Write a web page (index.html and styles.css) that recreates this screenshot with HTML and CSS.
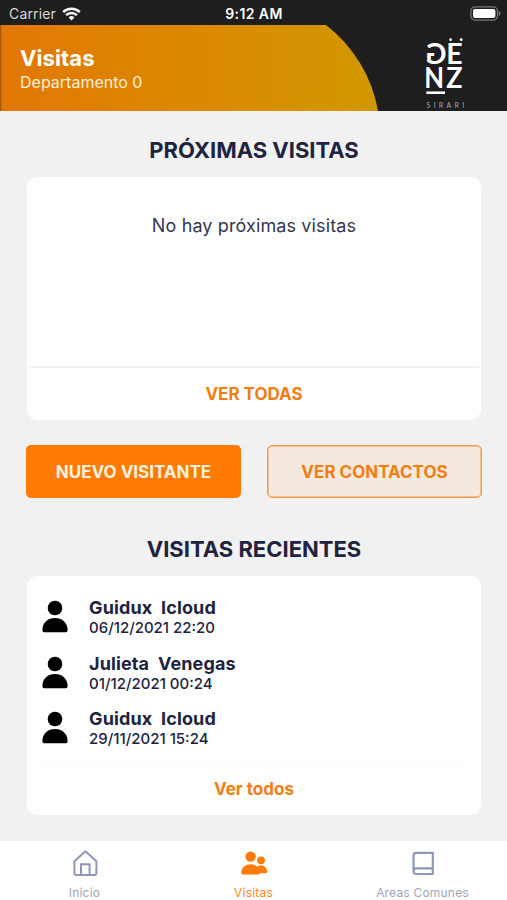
FILE: index.html
```html
<!DOCTYPE html>
<html lang="es">
<head>
<meta charset="utf-8">
<title>Visitas</title>
<link rel="stylesheet" href="styles.css">
</head>
<body>
<div class="status">
  <div class="status-left"><span class="carrier">Carrier</span>
    <svg class="wifi" width="19" height="14" viewBox="0 0 19 14" fill="none" stroke="#fff" stroke-width="2.5"><path d="M1.2 5.1a11.8 11.8 0 0 1 16.6 0M4.1 8.2a7.7 7.7 0 0 1 10.8 0"/><path d="M9.5 13.5L6.6 10.5a4.1 4.1 0 0 1 5.8 0z" fill="#fff" stroke="none"/></svg>
  </div>
  <span class="time">9:12 AM</span>
  <svg class="battery" width="31" height="16" viewBox="0 0 31 16"><rect x=".9" y=".9" width="26.6" height="13.2" rx="4" fill="none" stroke="#777" stroke-width="1.2"/><rect x="3" y="3" width="22.4" height="9" rx="2" fill="#fff"/><path d="M28.8 5v5q1.8-.8 1.8-2.5T28.8 5z" fill="#777"/></svg>
</div>
<header class="header">
  <svg class="swoosh" width="507" height="86" viewBox="0 0 507 86"><defs><linearGradient id="g"><stop offset="0" stop-color="#e27706"/><stop offset=".45" stop-color="#dc8700"/><stop offset="1" stop-color="#d19800"/></linearGradient></defs><path d="M0 0H326A138.7 138.7 0 0 1 378 86H0z" fill="url(#g)"/><path d="M.75 0V86" stroke="#a95b08" stroke-width="1.5"/></svg>
  <div class="heading"><h1>Visitas</h1><p>Departamento 0</p></div>
  <svg class="logo" width="44" height="76" viewBox="0 0 44 76" fill="#fff">
    <g class="logo-letters">
      <text transform="translate(24.6 27.3) scale(-1 1)">G</text>
      <text transform="translate(24.2 27.3) scale(1 1)">E</text>
      <text transform="translate(2.3 51.2) scale(.9 1)">N</text>
      <text transform="translate(24.3 51.2) scale(.94 1)">Z</text>
    </g>
    <circle cx="28.6" cy="2.7" r="1.4"/><circle cx="39.2" cy="2.7" r="1.4"/><path d="M4.3 54.4H23V57H4.3z"/>
    <text class="logo-sub" x="4.6" y="71.4" textLength="37.5">SIRARI</text>
  </svg>
</header>
<main>
  <h2>PRÓXIMAS VISITAS</h2>
  <section class="card upcoming">
    <p class="empty">No hay próximas visitas</p>
    <a class="card-link all">VER TODAS</a>
  </section>
  <div class="actions">
    <button class="primary"><span>NUEVO VISITANTE</span></button>
    <button class="secondary"><span>VER CONTACTOS</span></button>
  </div>
  <h2 class="recent-title">VISITAS RECIENTES</h2>
  <section class="card recent">
    <ul>
      <li><svg class="person" width="26" height="34" viewBox="0 0 26 34"><circle cx="13" cy="8" r="7.3"/><path d="M.4 30.3C.4 22.5 6 18.1 13 18.1s12.6 4.4 12.6 12.2q0 2-1.6 2H2q-1.6 0-1.6-2z"/></svg><div><b>Guidux&nbsp; Icloud</b><time>06/12/2021 22:20</time></div></li>
      <li><svg class="person" width="26" height="34" viewBox="0 0 26 34"><circle cx="13" cy="8" r="7.3"/><path d="M.4 30.3C.4 22.5 6 18.1 13 18.1s12.6 4.4 12.6 12.2q0 2-1.6 2H2q-1.6 0-1.6-2z"/></svg><div><b>Julieta&nbsp; Venegas</b><time>01/12/2021 00:24</time></div></li>
      <li><svg class="person" width="26" height="34" viewBox="0 0 26 34"><circle cx="13" cy="8" r="7.3"/><path d="M.4 30.3C.4 22.5 6 18.1 13 18.1s12.6 4.4 12.6 12.2q0 2-1.6 2H2q-1.6 0-1.6-2z"/></svg><div><b>Guidux&nbsp; Icloud</b><time>29/11/2021 15:24</time></div></li>
    </ul>
    <a class="card-link more">Ver todos</a>
  </section>
</main>
<nav>
  <a><svg width="28" height="30" viewBox="0 0 28 30" fill="none" stroke="#8e97b8" stroke-width="2" stroke-linejoin="round"><path d="M3.4 12.2L14.4 2.3l11 9.9V24q0 2-2 2H5.4q-2 0-2-2z"/><path d="M10 26V15.2h8.6V26"/></svg><span>Inicio</span></a>
  <a class="active"><svg width="28" height="30" viewBox="0 0 28 30" fill="#ff7b05"><circle cx="10.6" cy="7.6" r="5.2"/><circle cx="21" cy="11.3" r="3.9"/><path d="M1.2 23.6C1.6 18.2 5.9 15.2 10.5 15.2c2.8 0 5 .9 6.6 2.5 1.1-.8 2.5-1.1 3.9-1.1 3.6 0 6 2.6 6.1 6.1q0 1.5-1.5 1.5h-5.9q-.4 1.2-1.8 1.2H3q-1.8 0-1.8-1.8z"/></svg><span>Visitas</span></a>
  <a><svg width="28" height="30" viewBox="0 0 28 30" fill="none" stroke="#8e97b8" stroke-width="2.2" stroke-linejoin="round"><path d="M7.2 3.8H23.8V25H7.2q-2.7 0-2.7-2.8V6.6q0-2.8 2.7-2.8zM4.5 22.2q0-2.8 2.7-2.8h16.6"/></svg><span>Areas Comunes</span></a>
</nav>
</body>
</html>
```
FILE: styles.css
```css
* { box-sizing: border-box; }
body {
  margin: 0; width: 507px; height: 900px; overflow: hidden;
  display: flex; flex-direction: column;
  background: #f1f1f1; color: #20233f;
  font-family: Inter, "Liberation Sans", sans-serif;
}
h1, h2, p, ul { margin: 0; padding: 0; }
.status {
  height: 25px; flex: none; background: #1e1e1e; color: #fff;
  display: grid; grid-template-columns: 1fr auto 1fr; align-items: center;
  padding: 3px 6px 0 9px; font-size: 13.5px; line-height: 20px;
}
.status-left { display: flex; align-items: center; gap: 6px; }
.status svg { margin-top: -1px; }
.carrier { color: #d8d8d8; font-size: 14px; letter-spacing: .15px; }
.time { font-weight: 600; font-size: 14px; letter-spacing: .4px; margin-right: 2px; }
.battery { justify-self: end; }
.header {
  height: 86px; flex: none; position: relative; background: #1e1e1e; color: #fff;
  display: flex; justify-content: space-between; padding: 12px 41px 0 20px;
}
.swoosh { position: absolute; left: 0; top: 0; }
.heading { position: relative; padding-top: 8px; }
h1 { font-size: 22px; line-height: 27px; font-weight: 700; letter-spacing: .1px; }
.heading p { font-size: 16px; line-height: 20px; color: #fff0d5; }
.logo { position: relative; }
.logo-letters { font: 700 28.5px Lato, sans-serif; }
.logo-sub { font: 7px Lato, sans-serif; fill: #aaa; }
main { flex: 1; padding: 23px 26px 0 27px; }
h2 { font-size: 22px; line-height: 32px; font-weight: 700; text-align: center; }
.card { background: #fff; border-radius: 11px; display: flex; flex-direction: column; }
.upcoming { height: 243px; margin-top: 11px; }
.empty { flex: 1; padding-top: 37px; text-align: center; font-size: 18px; letter-spacing: .12px; line-height: 24px; color: #343750; }
.card-link { color: #f47d12; text-align: center; font-weight: 700; font-size: 17px; }
.all { height: 54px; border-top: 2px solid #f2f2f2; line-height: 52px; margin: 0 2px; }
.actions { display: grid; grid-template-columns: 215px 215px; justify-content: space-between; margin: 25px -1px 0 -1px; }
button { height: 53px; border-radius: 5px; font: 700 17px Inter, sans-serif; padding: 0; }
.primary { border: 0; background: #ff7b05; color: #fff3df; }
.secondary { border: 1px solid #f39a48; box-shadow: inset 0 0 0 1px #f3bf8d; background: #f3e9df; color: #f47d12; }
.recent-title { margin-top: 35px; }
.recent { height: 239px; margin-top: 11px; padding-top: 22px; }
.recent ul { flex: 1; list-style: none; padding-left: 15px; }
.recent li { display: flex; gap: 21px; height: 55.5px; }
.person { margin-top: 2px; }
.recent b { display: block; font-size: 18px; letter-spacing: .12px; line-height: 20px; font-weight: 700; }
.recent time { display: block; font-size: 15px; line-height: 20px; font-weight: 500; }
.more { height: 53px; margin: 0 16px; border-top: 1px solid #fafafa; line-height: 47px; }
nav { height: 59px; flex: none; background: #fff; display: grid; grid-template-columns: repeat(3, 1fr); }
nav a { display: flex; flex-direction: column; align-items: center; padding-top: 8px; color: #a0a5b8; font-size: 12px; letter-spacing: .2px; line-height: 16px; }
nav span { margin-top: 6px; }
nav .active { color: #f9882a; }
```
